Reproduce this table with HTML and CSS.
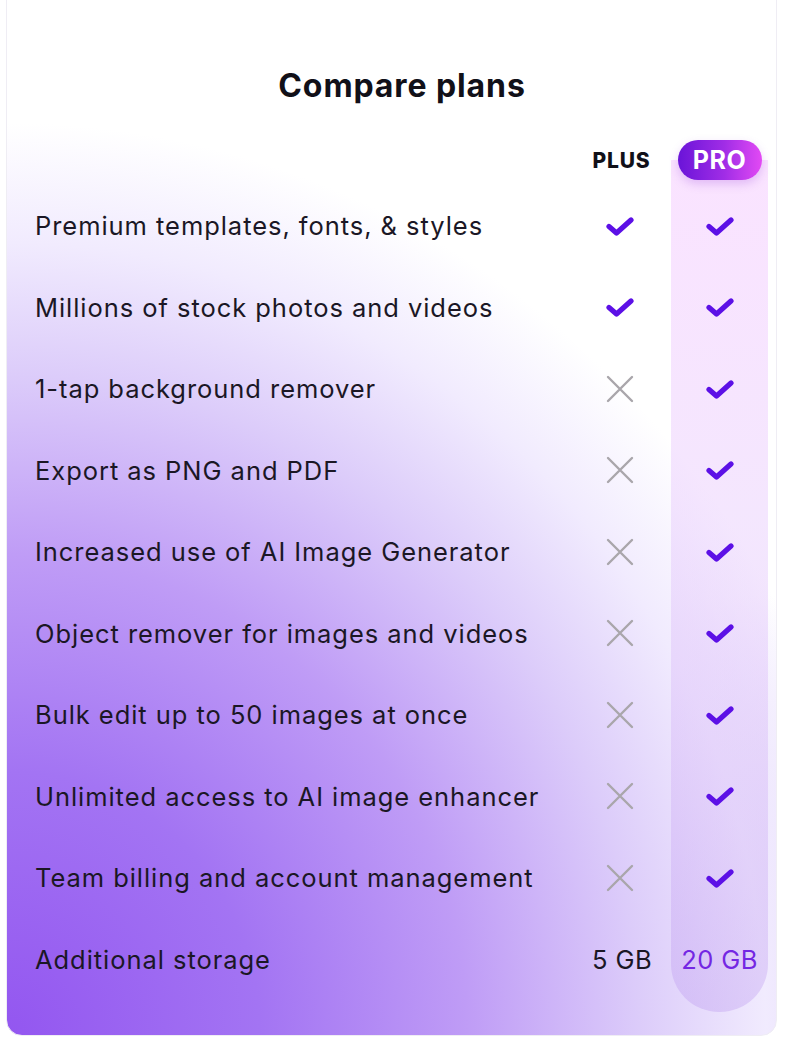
FILE: index.html
```html
<!DOCTYPE html>
<html lang="en">
<head>
<meta charset="utf-8">
<title>Compare plans</title>
<link rel="stylesheet" href="styles.css">
</head>
<body>
<div class="card">
  <h1 class="title">Compare plans</h1>
  <div class="table">
    <div class="col col-labels">
      <div class="head"></div>
      <div class="row label">Premium templates, fonts, &amp; styles</div>
      <div class="row label">Millions of stock photos and videos</div>
      <div class="row label">1-tap background remover</div>
      <div class="row label">Export as PNG and PDF</div>
      <div class="row label">Increased use of AI Image Generator</div>
      <div class="row label">Object remover for images and videos</div>
      <div class="row label">Bulk edit up to 50 images at once</div>
      <div class="row label">Unlimited access to AI image enhancer</div>
      <div class="row label">Team billing and account management</div>
      <div class="row label">Additional storage</div>
    </div>

    <div class="col col-plus">
      <div class="head"><span class="plus-name">PLUS</span></div>
      <div class="row"><svg class="check" viewBox="0 0 32 24"><path d="M5 12.5 L12.5 19 L27 6"/></svg></div>
      <div class="row"><svg class="check" viewBox="0 0 32 24"><path d="M5 12.5 L12.5 19 L27 6"/></svg></div>
      <div class="row"><svg class="cross" viewBox="0 0 28 28"><path d="M2 2 L26 26 M26 2 L2 26"/></svg></div>
      <div class="row"><svg class="cross" viewBox="0 0 28 28"><path d="M2 2 L26 26 M26 2 L2 26"/></svg></div>
      <div class="row"><svg class="cross" viewBox="0 0 28 28"><path d="M2 2 L26 26 M26 2 L2 26"/></svg></div>
      <div class="row"><svg class="cross" viewBox="0 0 28 28"><path d="M2 2 L26 26 M26 2 L2 26"/></svg></div>
      <div class="row"><svg class="cross" viewBox="0 0 28 28"><path d="M2 2 L26 26 M26 2 L2 26"/></svg></div>
      <div class="row"><svg class="cross" viewBox="0 0 28 28"><path d="M2 2 L26 26 M26 2 L2 26"/></svg></div>
      <div class="row"><svg class="cross" viewBox="0 0 28 28"><path d="M2 2 L26 26 M26 2 L2 26"/></svg></div>
      <div class="row storage">5 GB</div>
    </div>

    <div class="col col-pro">
      <div class="head"><span class="badge">PRO</span></div>
      <div class="row"><svg class="check" viewBox="0 0 32 24"><path d="M5 12.5 L12.5 19 L27 6"/></svg></div>
      <div class="row"><svg class="check" viewBox="0 0 32 24"><path d="M5 12.5 L12.5 19 L27 6"/></svg></div>
      <div class="row"><svg class="check" viewBox="0 0 32 24"><path d="M5 12.5 L12.5 19 L27 6"/></svg></div>
      <div class="row"><svg class="check" viewBox="0 0 32 24"><path d="M5 12.5 L12.5 19 L27 6"/></svg></div>
      <div class="row"><svg class="check" viewBox="0 0 32 24"><path d="M5 12.5 L12.5 19 L27 6"/></svg></div>
      <div class="row"><svg class="check" viewBox="0 0 32 24"><path d="M5 12.5 L12.5 19 L27 6"/></svg></div>
      <div class="row"><svg class="check" viewBox="0 0 32 24"><path d="M5 12.5 L12.5 19 L27 6"/></svg></div>
      <div class="row"><svg class="check" viewBox="0 0 32 24"><path d="M5 12.5 L12.5 19 L27 6"/></svg></div>
      <div class="row"><svg class="check" viewBox="0 0 32 24"><path d="M5 12.5 L12.5 19 L27 6"/></svg></div>
      <div class="row storage pro-text">20 GB</div>
    </div>
  </div>
</div>
</body>
</html>
```
FILE: styles.css
```css
html, body {
  margin: 0;
  padding: 0;
  background: #ffffff;
}
body {
  width: 800px;
  height: 1046px;
  overflow: hidden;
  font-family: "Inter", "Noto Sans", sans-serif;
  color: #1b1725;
}
.card {
  margin: -20px 23px 0 6px;
  height: 1056px;
  padding-top: 20px;
  box-sizing: border-box;
  border-radius: 16px;
  border: 1px solid #efedf4;
  background:
    radial-gradient(ellipse 1150px 1200px at 0% 100%, #9356f0 0%, #a374f3 22%, #bf9cf6 40%, #dcccfa 55%, #f1ebfe 66%, rgba(255,255,255,0) 76%),
    radial-gradient(ellipse 520px 440px at 100% 100%, #ddcdfa 0%, #ebe2fd 45%, rgba(255,255,255,0) 100%),
    #ffffff;
  overflow: hidden;
}
.title {
  margin: 0 0 36px;
  padding: 67px 0 0 21px;
  text-align: center;
  font-size: 32px;
  font-weight: 700;
  line-height: 36px;
  color: #111018;
  letter-spacing: 0.9px;
}
.table {
  display: flex;
  padding: 0 8px 0 28px;
}
.col {
  display: flex;
  flex-direction: column;
}
.col-labels {
  flex: 1;
}
.col-plus {
  width: 98px;
  margin-right: 2px;
}
.col-pro {
  width: 97px;
  padding-bottom: 12px;
  border-radius: 0 0 48px 48px;
  background: linear-gradient(180deg,
    rgba(255, 255, 255, 0) 0px,
    rgba(255, 255, 255, 0) 20px,
    rgba(247, 210, 255, 0.62) 20px,
    rgba(228, 196, 252, 0.42) 45%,
    rgba(178, 138, 236, 0.3) 100%);
}
.head {
  height: 45px;
  display: flex;
  align-items: flex-start;
  justify-content: center;
}
.plus-name {
  height: 40px;
  display: flex;
  align-items: center;
  padding-left: 3px;
  font-weight: 800;
  font-size: 21px;
  letter-spacing: 0.8px;
  color: #111018;
}
.badge {
  display: inline-flex;
  align-items: center;
  justify-content: center;
  width: 84px;
  height: 40px;
  border-radius: 20px;
  background: linear-gradient(90deg, #6a14d8 0%, #a02de6 55%, #e24af4 100%);
  color: #fff;
  font-weight: 700;
  font-size: 25px;
  letter-spacing: 0.5px;
  box-shadow: 0 4px 10px rgba(150, 60, 220, 0.25);
}
.row {
  height: 81.5px;
  display: flex;
  align-items: center;
  justify-content: center;
}
.row.label {
  justify-content: flex-start;
  font-size: 25.5px;
  letter-spacing: 0.95px;
  color: #1b1725;
  white-space: nowrap;
}
.check {
  width: 32px;
  height: 24px;
  fill: none;
  stroke: #5c10e6;
  stroke-width: 5.2;
  stroke-linecap: round;
  stroke-linejoin: round;
}
.cross {
  width: 28px;
  height: 28px;
  fill: none;
  stroke: #a9a6ab;
  stroke-width: 2.4;
  stroke-linecap: round;
}
.storage {
  font-size: 25.5px;
  letter-spacing: 0.4px;
  color: #1b1725;
}
.col-plus .storage {
  padding-left: 4px;
}
.storage.pro-text {
  color: #7427e3;
}
```
